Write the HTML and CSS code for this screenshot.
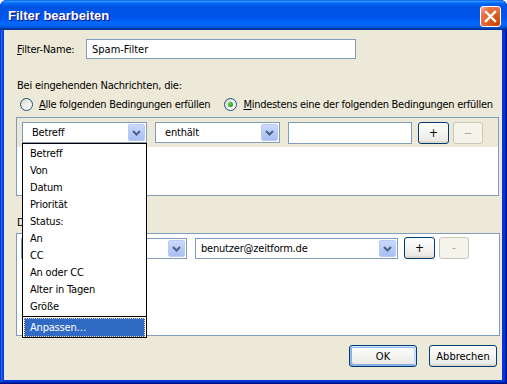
FILE: index.html
```html
<!DOCTYPE html>
<html lang="de">
<head>
    <meta charset="UTF-8">
    <title>Filter bearbeiten</title>
    <link rel="stylesheet" href="styles.css">
</head>
<body>
    <div class="window">
        <div class="titlebar">
            <span class="title">Filter bearbeiten</span>
            <span class="close-btn">
                <svg width="13" height="13" viewBox="0 0 13 13"><path d="M2 2 L11 11 M11 2 L2 11" stroke="#fff" stroke-width="2.4" stroke-linecap="square"/></svg>
            </span>
        </div>
        <div class="client">
            <div class="name-row">
                <span class="label"><u>F</u>ilter-Name:</span>
                <input class="textbox name-input" type="text" value="Spam-Filter">
            </div>

            <div class="caption">Bei eingehenden Nachrichten, die:</div>
            <div class="radio-row">
                <span class="radio"><span class="radio-dot"></span><span><u>A</u>lle folgenden Bedingungen erfüllen</span></span>
                <span class="radio checked"><span class="radio-dot"></span><span><u>M</u>indestens eine der folgenden Bedingungen erfüllen</span></span>
            </div>

            <div class="listbox conditions">
                <div class="list-row selected">
                    <div class="combo w-subject"><span class="combo-text">Betreff</span><span class="combo-arrow"></span></div>
                    <div class="combo w-op"><span class="combo-text">enthält</span><span class="combo-arrow"></span></div>
                    <input class="textbox w-value" type="text" value="">
                    <button class="btn small">+</button>
                    <button class="btn small disabled">−</button>
                </div>
            </div>

            <div class="caption actions-caption">Diese Aktionen ausführen:</div>
            <div class="listbox actions">
                <div class="list-row">
                    <div class="combo w-action"><span class="combo-text"></span><span class="combo-arrow"></span></div>
                    <div class="combo w-target"><span class="combo-text tight">benutzer@zeitform.de</span><span class="combo-arrow"></span></div>
                    <button class="btn small">+</button>
                    <button class="btn small disabled">-</button>
                </div>
            </div>

            <div class="dialog-buttons">
                <button class="btn default">OK</button>
                <button class="btn">Abbrechen</button>
            </div>

            <!-- geöffnete Auswahlliste -->
            <div class="popup">
                <div class="popup-item">Betreff</div>
                <div class="popup-item">Von</div>
                <div class="popup-item">Datum</div>
                <div class="popup-item">Priorität</div>
                <div class="popup-item">Status:</div>
                <div class="popup-item">An</div>
                <div class="popup-item">CC</div>
                <div class="popup-item">An oder CC</div>
                <div class="popup-item">Alter in Tagen</div>
                <div class="popup-item">Größe</div>
                <div class="popup-sep"></div>
                <div class="popup-item active">Anpassen…</div>
            </div>
        </div>
    </div>
</body>
</html>
```

FILE: styles.css
```css
body {
    margin: 0;
    background: #fff;
    font-family: "DejaVu Sans Condensed", "DejaVu Sans", sans-serif;
    font-size: 11px;
    letter-spacing: -0.2px;
    color: #000;
}
.window {
    width: 507px;
    height: 384px;
    box-sizing: border-box;
    padding: 0 5px 4px 4px;
    background: #0831d9;
    border-radius: 7px 7px 0 0;
    box-shadow: inset -1px -1px #00138c, inset 1px 1px #0831d9, inset -2px -2px #001ea0, inset 2px 2px #166aee, inset -3px -3px #003bda, inset 3px 3px #0855dd;
    display: flex;
    flex-direction: column;
}
.titlebar {
    height: 30px;
    margin: 0 -5px 0 -4px;
    padding: 0 6px 0 8px;
    border-radius: 7px 7px 0 0;
    background: linear-gradient(to bottom, #0058ee 0%, #3593ff 4%, #288eff 6%, #127dff 8%, #036ffc 10%, #0262ee 14%, #0057e5 20%, #0054e3 24%, #0055eb 56%, #005bf5 66%, #026afe 76%, #0062ef 86%, #0052d6 92%, #0040ab 94%, #003092 100%);
    display: flex;
    align-items: center;
    justify-content: space-between;
}
.title {
    font-family: "Liberation Sans", Arial, sans-serif;
    font-weight: bold;
    font-size: 13px;
    letter-spacing: 0;
    color: #fff;
    text-shadow: 1px 1px #0f1089;
    padding-top: 1px;
}
.close-btn {
    width: 21px;
    height: 21px;
    box-sizing: border-box;
    border: 1px solid #fff;
    border-radius: 3px;
    background: radial-gradient(circle at 85% 85%, #c94400 0%, #dc6527 45%, #e8764a 75%, #f5b79a 100%);
    display: flex;
    align-items: center;
    justify-content: center;
    margin-top: 2px;
}
.client {
    flex: 1;
    position: relative;
    background: #ece9d8;
    padding: 9px 0 0 0;
}
.name-row {
    display: flex;
    align-items: center;
    padding-left: 13px;
}
.label {
    width: 69px;
}
.textbox {
    box-sizing: border-box;
    border: 1px solid #7f9db9;
    background: #fff;
    font: inherit;
    padding: 0 5px;
    margin: 0;
    outline: none;
}
.name-input {
    width: 270px;
    height: 20px;
}
.caption {
    padding-left: 13px;
    margin-top: 20px;
    line-height: 14px;
    white-space: nowrap;
}
.radio-row {
    display: flex;
    padding-left: 16px;
    margin-top: 3px;
    height: 17px;
    align-items: center;
    gap: 14px;
    white-space: nowrap;
    letter-spacing: -0.27px;
}
.radio {
    display: flex;
    align-items: center;
    gap: 6px;
}
.radio-dot {
    flex: none;
    width: 13px;
    height: 13px;
    box-sizing: border-box;
    border: 1px solid #1c5180;
    border-radius: 50%;
    background: linear-gradient(135deg, #dcd9c5 0%, #f4f3ee 60%, #fff 100%);
    display: flex;
    align-items: center;
    justify-content: center;
}
.radio.checked .radio-dot::after {
    content: "";
    width: 5px;
    height: 5px;
    border-radius: 50%;
    background: radial-gradient(circle at 40% 40%, #55d551, #21a121 70%);
}
.listbox {
    margin-left: 12px;
    box-sizing: border-box;
    border: 1px solid #7f9db9;
    background: #fff;
}
.conditions {
    width: 483px;
    height: 79px;
    margin-top: 4px;
}
.actions {
    width: 484px;
    height: 103px;
    margin-top: 3px;
}
.actions-caption {
    margin-top: 20px;
}
.list-row {
    display: flex;
    align-items: center;
    padding: 3px 0 0 4px;
}
.list-row.selected {
    background: #ece9d8;
    height: 29px;
    box-sizing: border-box;
    padding: 0 0 0 5px;
}
.combo {
    position: relative;
    box-sizing: border-box;
    height: 21px;
    border: 1px solid #7f9db9;
    background: #fff;
    display: flex;
    align-items: center;
    margin-right: 8px;
}
.combo-text {
    flex: 1;
    padding-left: 9px;
    white-space: nowrap;
    overflow: hidden;
}
.combo-text.tight {
    padding-left: 5px;
}
.combo-arrow {
    flex: none;
    width: 17px;
    height: 17px;
    margin-right: 1px;
    box-sizing: border-box;
    border: 1px solid #b9caf5;
    border-radius: 2px;
    background-image: url("data:image/svg+xml;utf8,<svg xmlns='http://www.w3.org/2000/svg' width='15' height='15'><path d='M4 6 L7.5 9.5 L11 6' fill='none' stroke='%234d6185' stroke-width='2'/></svg>"), linear-gradient(to bottom, #cbdafc 0%, #b5c9f7 60%, #a9bff3 100%);
    background-repeat: no-repeat;
}
.w-subject { width: 125px; }
.w-op { width: 125px; }
.w-value { width: 124px; height: 22px; margin-right: 6px; }
.w-action { width: 166px; }
.w-target { width: 203px; margin-right: 6px; }
.btn {
    box-sizing: border-box;
    height: 22px;
    width: 68px;
    border: 1px solid #003c74;
    border-radius: 3px;
    background: linear-gradient(to bottom, #fff 0%, #ecebe6 86%, #d6d0c5 100%);
    font: inherit;
    color: #000;
    padding: 0;
    margin: 0;
}
.btn.small {
    width: 31px;
    margin-right: 4px;
    font-size: 12px;
}
.btn.disabled {
    border-color: #c9c7ba;
    background: #f5f4ea;
    color: #aca899;
    width: 30px;
}
.btn.default {
    box-shadow: inset -1px 1px #cee7ff, inset 1px 2px #98b8ea, inset -2px 2px #bcd4f6, inset 1px -1px #89ade4, inset 2px -2px #89ade4;
}
.dialog-buttons {
    display: flex;
    justify-content: flex-end;
    gap: 12px;
    padding-right: 5px;
    margin-top: 9px;
}
.popup {
    position: absolute;
    left: 18px;
    top: 113px;
    width: 125px;
    box-sizing: border-box;
    border: 1px solid #000;
    background: #fff;
    padding: 1px 1px 0 1px;
}
.popup-item {
    height: 17px;
    line-height: 17px;
    padding-left: 6px;
}
.popup-sep {
    border-top: 1px solid #000;
    margin: 1px -1px 1px -1px;
}
.popup-item.active {
    height: 19px;
    line-height: 19px;
    box-sizing: border-box;
    background: #316ac5;
    color: #fff;
    outline: 1px dotted #f5d68b;
    outline-offset: -1px;
}
```
